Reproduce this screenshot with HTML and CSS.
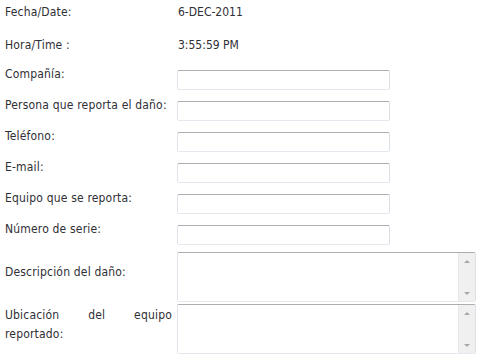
FILE: index.html
```html
<!DOCTYPE html>
<html lang="es">
<head>
<meta charset="UTF-8">
<meta name="viewport" content="width=device-width, initial-scale=1.0">
<title>Reporte de daño</title>
<link rel="stylesheet" href="styles.css">
</head>
<body>

<form class="report">
    <div class="row row-date">
        <label>Fecha/Date:</label>
        <span class="value">6-DEC-2011</span>
    </div>
    <div class="row row-time">
        <label>Hora/Time :</label>
        <span class="value">3:55:59 PM</span>
    </div>

    <div class="row row-field">
        <label for="company">Compañía:</label>
        <input type="text" id="company" name="company">
    </div>
    <div class="row row-field">
        <label for="reporter">Persona que reporta el daño:</label>
        <input type="text" id="reporter" name="reporter">
    </div>
    <div class="row row-field">
        <label for="phone">Teléfono:</label>
        <input type="text" id="phone" name="phone">
    </div>
    <div class="row row-field">
        <label for="email">E-mail:</label>
        <input type="text" id="email" name="email">
    </div>
    <div class="row row-field">
        <label for="equipment">Equipo que se reporta:</label>
        <input type="text" id="equipment" name="equipment">
    </div>
    <div class="row row-field">
        <label for="serial">Número de serie:</label>
        <input type="text" id="serial" name="serial">
    </div>

    <div class="row row-area row-desc">
        <label for="description">Descripción del daño:</label>
        <div class="area-box">
            <textarea id="description" name="description"></textarea>
            <div class="scroll"><span class="arrow-up"></span><span class="arrow-down"></span></div>
        </div>
    </div>
    <div class="row row-area row-loc">
        <label for="location" class="justify">Ubicación del equipo reportado:</label>
        <div class="area-box">
            <textarea id="location" name="location"></textarea>
            <div class="scroll"><span class="arrow-up"></span><span class="arrow-down"></span></div>
        </div>
    </div>
</form>

</body>
</html>
```
FILE: styles.css
```css
body {
    margin: 0;
    padding: 3px 0 0 5px;
    font-family: "DejaVu Sans Condensed", "DejaVu Sans", sans-serif;
    font-size: 12px;
    line-height: 19px;
    color: #2f2f35;
    background: #fff;
}

.row {
    display: grid;
    grid-template-columns: 167px 299px;
    column-gap: 5px;
    align-items: start;
}

.row label {
    letter-spacing: 0.18px;
    white-space: nowrap;
}

.row-date {
    height: 33px;
}

.row-time {
    height: 29px;
}

.value {
    padding-left: 1px;
}

.row-field {
    height: 31px;
}

.row-field input {
    width: 213px;
    height: 20px;
    margin: 5px 0 0;
    padding: 0 3px;
    box-sizing: border-box;
    border: 1px solid;
    border-color: #abadb3 #dbdfe6 #e3e9ef #e2e3ea;
    border-radius: 2px;
    font: inherit;
}

.row-area {
    height: 52px;
}

.row-desc label {
    padding-top: 12px;
}

.row-loc label {
    padding-top: 3px;
}

.row label.justify {
    white-space: normal;
    text-align: justify;
    text-align-last: left;
}

.area-box {
    display: flex;
    height: 50px;
    margin-top: 1px;
    box-sizing: border-box;
    border: 1px solid;
    border-color: #abadb3 #dbdfe6 #e3e9ef #e2e3ea;
    border-radius: 2px;
    overflow: hidden;
}

.area-box textarea {
    flex: 1;
    border: none;
    resize: none;
    outline: none;
    padding: 2px 3px;
    font: inherit;
}

.scroll {
    width: 17px;
    background: #f0f0f0;
    border-left: 1px solid #e8e8e8;
    display: flex;
    flex-direction: column;
    justify-content: space-between;
    align-items: center;
    padding: 7px 0 6px;
    box-sizing: border-box;
}

.arrow-up,
.arrow-down {
    width: 0;
    height: 0;
    border-left: 3px solid transparent;
    border-right: 3px solid transparent;
}

.arrow-up {
    border-bottom: 3px solid #a8a8a8;
}

.arrow-down {
    border-top: 3px solid #a8a8a8;
}
```
